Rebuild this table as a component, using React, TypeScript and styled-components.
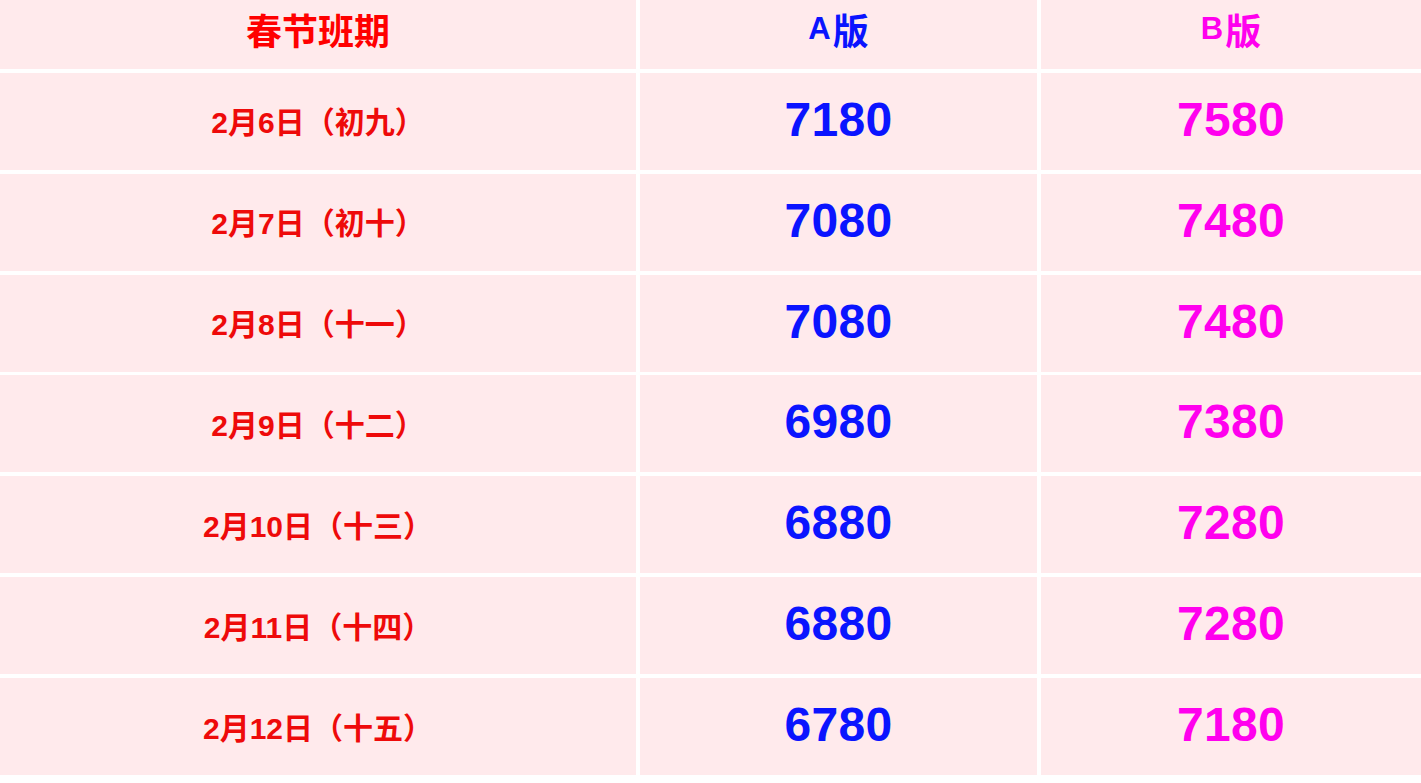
import React from 'react';
import styled, { createGlobalStyle } from 'styled-components';

const GlobalStyle = createGlobalStyle`
  html, body {
    margin: 0;
    padding: 0;
    background: #ffffff;
  }
  body {
    font-family: "Liberation Sans", "Noto Sans CJK SC", sans-serif;
  }
`;

const colors = {
  red: '#ff0000',
  blue: '#0a14ff',
  pink: '#ff00ee',
};

type Tone = keyof typeof colors;

const PriceTable = styled.div`
  display: grid;
  grid-template-columns: 636px 397px 1fr;
  grid-template-rows: 69px repeat(7, 97px);
  column-gap: 4px;
  row-gap: 3.86px;
  width: 1421px;
  background: #ffffff;
`;

const Cell = styled.div`
  display: flex;
  align-items: center;
  justify-content: center;
  background: #ffeaec;
  font-weight: 700;
  white-space: nowrap;
`;

const HeaderCell = styled(Cell)<{ $tone: Tone }>`
  color: ${({ $tone }) => colors[$tone]};
  font-family: "Noto Sans CJK SC", sans-serif;
  font-size: 36px;
  padding-bottom: 11px;
`;

const Latin = styled.span`
  font-family: "Liberation Sans", sans-serif;
  font-size: 31px;
  margin-right: 2px;
`;

const DateCell = styled(Cell)`
  color: #ee0a0a;
  font-size: 30px;
  padding-bottom: 2px;
`;

const PriceCell = styled(Cell)<{ $tone: Tone }>`
  color: ${({ $tone }) => colors[$tone]};
  font-size: 48px;
  letter-spacing: 0.3px;
  padding-bottom: 4px;
`;

const rows = [
  { date: '2月6日（初九）', a: 7180, b: 7580 },
  { date: '2月7日（初十）', a: 7080, b: 7480 },
  { date: '2月8日（十一）', a: 7080, b: 7480 },
  { date: '2月9日（十二）', a: 6980, b: 7380 },
  { date: '2月10日（十三）', a: 6880, b: 7280 },
  { date: '2月11日（十四）', a: 6880, b: 7280 },
  { date: '2月12日（十五）', a: 6780, b: 7180 },
];

export default function App() {
  return (
    <>
      <GlobalStyle />
      <PriceTable>
        <HeaderCell $tone="red">春节班期</HeaderCell>
        <HeaderCell $tone="blue">
          <Latin>A</Latin>版
        </HeaderCell>
        <HeaderCell $tone="pink">
          <Latin>B</Latin>版
        </HeaderCell>
        {rows.map((row) => (
          <React.Fragment key={row.date}>
            <DateCell>{row.date}</DateCell>
            <PriceCell $tone="blue">{row.a}</PriceCell>
            <PriceCell $tone="pink">{row.b}</PriceCell>
          </React.Fragment>
        ))}
      </PriceTable>
    </>
  );
}
